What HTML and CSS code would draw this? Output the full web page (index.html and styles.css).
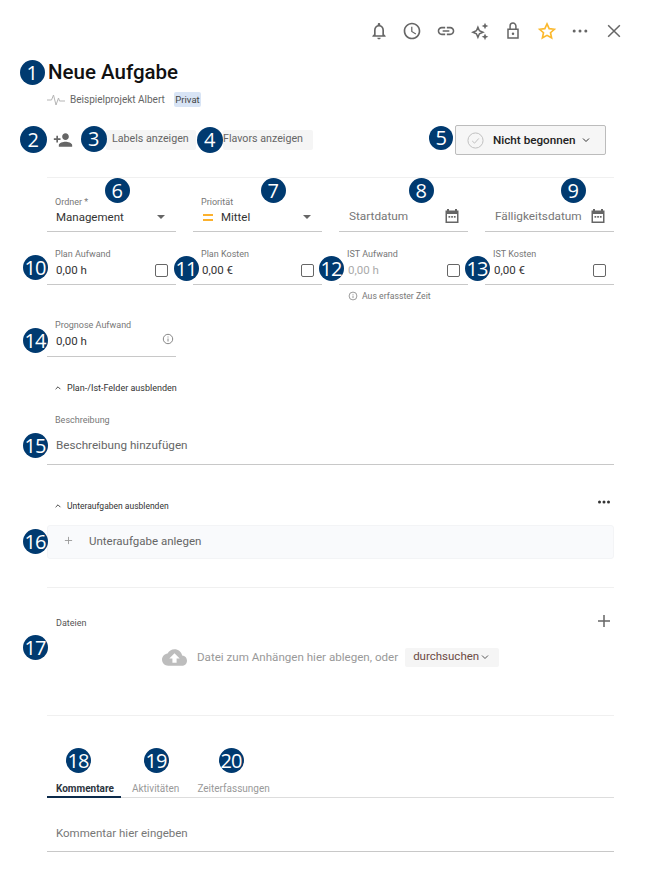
FILE: index.html
```html
<!DOCTYPE html>
<html lang="de">
<head>
<meta charset="utf-8">
<title>Neue Aufgabe</title>
<link rel="stylesheet" href="styles.css">
</head>
<body>
<main class="page">
  <header class="toolbar">
    <svg class="tb-icon" viewBox="0 0 24 24"><path d="M12 22c1.1 0 2-.9 2-2h-4c0 1.1.9 2 2 2zm6-6v-5c0-3.07-1.63-5.64-4.5-6.32V4c0-.83-.67-1.5-1.5-1.5s-1.5.67-1.5 1.5v.68C7.64 5.36 6 7.92 6 11v5l-2 2v1h16v-1l-2-2zm-2 1H8v-6c0-2.48 1.51-4.5 4-4.5s4 2.02 4 4.5v6z"/></svg>
    <svg class="tb-icon" viewBox="0 0 24 24"><path d="M11.99 2C6.47 2 2 6.48 2 12s4.47 10 9.99 10C17.52 22 22 17.52 22 12S17.52 2 11.99 2zM12 20c-4.42 0-8-3.58-8-8s3.58-8 8-8 8 3.58 8 8-3.58 8-8 8zm.5-13H11v6l5.25 3.15.75-1.23-4.5-2.67z"/></svg>
    <svg class="tb-icon" viewBox="0 0 24 24"><path d="M3.9 12c0-1.71 1.39-3.1 3.1-3.1h4V7H7c-2.76 0-5 2.24-5 5s2.24 5 5 5h4v-1.9H7c-1.71 0-3.1-1.39-3.1-3.1zM8 13h8v-2H8v2zm9-6h-4v1.9h4c1.71 0 3.1 1.39 3.1 3.1s-1.39 3.1-3.1 3.1h-4V17h4c2.76 0 5-2.24 5-5s-2.24-5-5-5z"/></svg>
    <svg class="tb-icon" viewBox="0 0 24 24"><path class="outline" d="M9.5 7.5l1.8 4.2 4.2 1.8-4.2 1.8-1.8 4.2-1.8-4.2-4.2-1.8 4.2-1.8z"/><path d="M18 2l1.2 2.8L22 6l-2.8 1.2L18 10l-1.2-2.8L14 6l2.8-1.2zM18 15l1.2 2.8L22 19l-2.8 1.2L18 23l-1.2-2.8L14 19l2.8-1.2z"/></svg>
    <svg class="tb-icon" viewBox="0 0 24 24"><path class="outline" d="M6 10h12v10.500H6zM8.500 10V6a3.500 3.500 0 0 1 7 0v4"/><circle cx="12" cy="15.200" r="1.500"/></svg>
    <svg class="tb-icon star" viewBox="0 0 24 24"><path d="M12 3.500l2.600 5.700 6.200.7-4.600 4.200 1.300 6.100L12 17.200l-5.500 3 1.300-6.100-4.600-4.200 6.200-.7z"/></svg>
    <svg class="tb-icon" viewBox="0 0 24 24"><circle cx="5" cy="12" r="1.800"/><circle cx="12" cy="12" r="1.800"/><circle cx="19" cy="12" r="1.800"/></svg>
    <svg class="tb-icon" viewBox="0 0 24 24"><path class="outline" d="M5 5l14 14M19 5L5 19"/></svg>
  </header>

  <h1 class="title">Neue Aufgabe</h1>
  <div class="project">
    <svg class="pulse" viewBox="0 0 18 12"><path d="M0 6h4.500l2-5 2.500 10 2.500-7 1 3H18"/></svg>
    <span class="project-name">Beispielprojekt Albert</span>
    <span class="private">Privat</span>
  </div>

  <div class="actions">
    <svg class="add-person" viewBox="0 0 24 24"><path d="M15 12c2.210 0 4-1.790 4-4s-1.790-4-4-4-4 1.790-4 4 1.790 4 4 4zm-9-2V7H4v3H1v2h3v3h2v-3h3v-2H6zm9 4c-2.670 0-8 1.340-8 4v2h16v-2c0-2.660-5.330-4-8-4z"/></svg>
    <span class="chip chip-labels">Labels anzeigen</span>
    <span class="chip chip-flavors">Flavors anzeigen</span>
    <button class="status" type="button">
      <svg class="status-check" viewBox="0 0 18 18"><circle cx="9" cy="9" r="8"/><path d="M5.500 9.500l2.500 2.300 4.500-5"/></svg>
      <span>Nicht begonnen</span>
      <svg class="chev" viewBox="0 0 10 6"><path d="M2 1.500l3 3 3-3"/></svg>
    </button>
  </div>

  <hr class="divider first-divider">

  <section class="grid row-one">
    <div class="field">
      <label class="label">Ordner *</label>
      <div class="value"><span class="grow">Management</span><i class="caret"></i></div>
    </div>
    <div class="field">
      <label class="label">Priorität</label>
      <div class="value"><i class="prio"></i><span class="grow">Mittel</span><i class="caret"></i></div>
    </div>
    <div class="field">
      <div class="value date"><span class="grow muted">Startdatum</span>
        <svg class="cal" viewBox="0 0 16 16"><path d="M3 1h2v1.500h6V1h2v1.500h1.500V15h-13V2.500H3zM3 6v7.500h10V6z"/><rect x="4.500" y="8" width="1.700" height="1.700"/><rect x="7.200" y="8" width="1.700" height="1.700"/><rect x="9.900" y="8" width="1.700" height="1.700"/></svg>
      </div>
    </div>
    <div class="field">
      <div class="value date"><span class="grow muted">Fälligkeitsdatum</span>
        <svg class="cal" viewBox="0 0 16 16"><path d="M3 1h2v1.500h6V1h2v1.500h1.500V15h-13V2.500H3zM3 6v7.500h10V6z"/><rect x="4.500" y="8" width="1.700" height="1.700"/><rect x="7.200" y="8" width="1.700" height="1.700"/><rect x="9.900" y="8" width="1.700" height="1.700"/></svg>
      </div>
    </div>
  </section>

  <section class="grid row-two">
    <div class="field">
      <label class="label">Plan Aufwand</label>
      <div class="value"><span class="grow">0,00 h</span><i class="check"></i></div>
    </div>
    <div class="field">
      <label class="label">Plan Kosten</label>
      <div class="value"><span class="grow">0,00 €</span><i class="check"></i></div>
    </div>
    <div class="field">
      <label class="label">IST Aufwand</label>
      <div class="value"><span class="grow faded">0,00 h</span><i class="check"></i></div>
      <div class="hint">
        <svg class="info" viewBox="0 0 12 12"><circle cx="6" cy="6" r="4.700"/><path d="M6 5.500v3M6 3.500v1"/></svg>
        <span>Aus erfasster Zeit</span>
      </div>
    </div>
    <div class="field">
      <label class="label">IST Kosten</label>
      <div class="value"><span class="grow">0,00 €</span><i class="check"></i></div>
    </div>
  </section>

  <section class="grid row-three">
    <div class="field">
      <label class="label">Prognose Aufwand</label>
      <div class="value"><span class="grow">0,00 h</span>
        <svg class="info info-large" viewBox="0 0 12 12"><circle cx="6" cy="6" r="4.700"/><path d="M6 5.500v3M6 3.500v1"/></svg>
      </div>
    </div>
  </section>

  <div class="toggle toggle-plan">
    <svg class="chev-up" viewBox="0 0 10 6"><path d="M2 4.500l3-3 3 3"/></svg>
    <span>Plan-/Ist-Felder ausblenden</span>
  </div>

  <section class="description">
    <label class="label">Beschreibung</label>
    <div class="desc-value">Beschreibung hinzufügen</div>
  </section>

  <div class="toggle toggle-sub">
    <svg class="chev-up" viewBox="0 0 10 6"><path d="M2 4.500l3-3 3 3"/></svg>
    <span class="grow">Unteraufgaben ausblenden</span>
    <svg class="more" viewBox="0 0 14 4"><circle cx="2.500" cy="2" r="1.500"/><circle cx="7" cy="2" r="1.500"/><circle cx="11.500" cy="2" r="1.500"/></svg>
  </div>

  <div class="subtask">
    <svg class="sub-plus" viewBox="0 0 10 10"><path d="M5 1v8M1 5h8"/></svg>
    <span>Unteraufgabe anlegen</span>
  </div>

  <hr class="divider sub-divider">

  <section class="files">
    <div class="files-head">
      <span class="files-title">Dateien</span>
      <svg class="files-plus" viewBox="0 0 14 14"><path d="M7 1v12M1 7h12"/></svg>
    </div>
    <div class="drop">
      <svg class="cloud" viewBox="0 0 24 24"><path d="M19.350 10.040C18.670 6.590 15.640 4 12 4 9.110 4 6.600 5.640 5.350 8.040 2.340 8.360 0 10.910 0 14c0 3.310 2.690 6 6 6h13c2.760 0 5-2.240 5-5 0-2.640-2.050-4.780-4.650-4.960zM14 13v4h-4v-4H7l5-5 5 5h-3z"/></svg>
      <span class="drop-text">Datei zum Anhängen hier ablegen, oder</span>
      <span class="browse">durchsuchen<svg class="chev-small" viewBox="0 0 10 6"><path d="M2 1.500l3 3 3-3"/></svg></span>
    </div>
  </section>

  <hr class="divider files-divider">

  <nav class="tabs">
    <span class="tab active">Kommentare</span>
    <span class="tab">Aktivitäten</span>
    <span class="tab">Zeiterfassungen</span>
  </nav>

  <div class="comment">Kommentar hier eingeben</div>

  <div class="badges">
    <span class="badge b1">1</span><span class="badge b2">2</span><span class="badge b3">3</span><span class="badge b4">4</span><span class="badge b5">5</span>
    <span class="badge b6">6</span><span class="badge b7">7</span><span class="badge b8">8</span><span class="badge b9">9</span><span class="badge b10">10</span>
    <span class="badge b11">11</span><span class="badge b12">12</span><span class="badge b13">13</span><span class="badge b14">14</span><span class="badge b15">15</span>
    <span class="badge b16">16</span><span class="badge b17">17</span><span class="badge b18">18</span><span class="badge b19">19</span><span class="badge b20">20</span>
  </div>
</main>
</body>
</html>
```
FILE: styles.css
```css
* { box-sizing: border-box; }
html, body { margin: 0; padding: 0; background: #fff; }
body { font-family: Roboto, "Liberation Sans", sans-serif; color: #333; }
.page { position: relative; width: 661px; height: 891px; padding: 0 47px; overflow: hidden; }
.grow { flex: 1; min-width: 0; }

.toolbar { height: 62px; padding: 21px 0 0 0; display: flex; justify-content: flex-end; gap: 13.600px; margin-right: -10px; }
.tb-icon { width: 20px; height: 20px; fill: #666; flex: none; }
.tb-icon .outline { fill: none; stroke: #666; stroke-width: 1.800; }
.tb-icon.star path { fill: none; stroke: #fbb92e; stroke-width: 2; stroke-linejoin: miter; }

.title { margin: 0; height: 20px; line-height: 20px; font-size: 20.500px; font-weight: 500; color: #111; padding-left: 1px; }
.project { height: 15px; margin-top: 10px; display: flex; align-items: center; font-size: 10px; color: #666; }
.pulse { width: 18px; height: 12px; fill: none; stroke: #b5b5b5; stroke-width: 1; margin-right: 5px; }
.project-name { width: 104px; }
.private { height: 15px; width: 27px; line-height: 16px; font-size: 9.500px; text-align: center; background: #d8e4f5; border-radius: 2px; color: #444; }

.actions { display: flex; align-items: flex-start; height: 30px; margin-top: 18px; position: relative; }
.add-person { width: 20px; height: 20px; fill: #666; margin: 5px 0 0 6px; flex: none; }
.chip { height: 20px; line-height: 18px; font-size: 10.700px; color: #666; background: #f5f5f5; border-radius: 2px; margin-top: 5px; }
.chip-labels { width: 90px; margin-left: 33px; padding-left: 6px; }
.chip-flavors { width: 90px; margin-left: 27px; padding-left: 0; }
.status { margin-left: 142px; width: 151px; height: 30px; display: flex; align-items: center; padding: 0 0 0 11px; background: #f6f6f6; border: 1px solid #bcbcbc; border-radius: 2px; font: 500 11.700px Roboto, sans-serif; color: #222; }
.status-check { width: 17px; height: 17px; fill: none; stroke: #bdbdbd; stroke-width: 1; margin-right: 9px; flex: none; }
.chev { width: 10px; height: 6px; fill: none; stroke: #333; stroke-width: 1; margin-left: 5px; }

.divider { border: 0; height: 1px; margin: 0; background: #f0f0f0; }
.first-divider { margin-top: 22px; }

.grid { display: grid; grid-template-columns: repeat(4, 129px); column-gap: 17px; }
.field { position: relative; display: flex; flex-direction: column; justify-content: flex-end; }
.label { display: block; font-size: 9px; line-height: 10px; color: #777; padding-left: 8px; }
.value { height: 24px; display: flex; align-items: center; padding: 0 8px 6px 9px; border-bottom: 1px solid #c8c8c8; font-size: 11.500px; line-height: 16px; color: #333; }
.muted { color: #777; }
.faded { color: #aaa; }
.row-one { height: 54px; }
.row-one .label { margin-bottom: 1px; }
.row-two { height: 53px; }
.row-two .field { justify-content: flex-start; }
.row-two .label { margin-top: 17px; }
.row-two .value { height: 26px; padding-top: 1px; padding-bottom: 5px; }
.row-three { height: 72px; padding-top: 35px; }
.row-three .label { margin-bottom: 1px; }
.row-three .value { height: 26px; padding-top: 1px; padding-bottom: 7px; }
.caret { width: 0; height: 0; border-left: 4.500px solid transparent; border-right: 4.500px solid transparent; border-top: 4.500px solid #666; margin-right: 3px; }
.prio { width: 10px; height: 7px; border-top: 2px solid #fbb12e; border-bottom: 2px solid #fbb12e; margin: 2px 8px 0 1px; flex: none; }
.date { height: 32px; padding: 0 0 0 10px; font-size: 11.800px; }
.cal { width: 16px; height: 16px; fill: #666; margin: 1px 8px 0 0; flex: none; }
.check { width: 13px; height: 13px; border: 1px solid #666; border-radius: 2px; margin: 2px 0 0 0; flex: none; }
.hint { position: absolute; top: 59px; left: 9px; display: flex; align-items: center; gap: 4px; font-size: 8.700px; color: #777; white-space: nowrap; }
.info { width: 10px; height: 10px; fill: none; stroke: #888; stroke-width: 1; }
.info-large { width: 12px; height: 12px; margin: -4px -6px 0 0; }

.toggle { display: flex; align-items: center; font-size: 9px; color: #333; }
.toggle-plan { height: 12px; margin-top: 25px; padding-left: 7px; }
.toggle-sub { height: 12px; margin-top: 35px; padding-left: 7px; }
.toggle-sub .grow { font-size: 8.500px; }
.chev-up { width: 8px; height: 6px; fill: none; stroke: #333; stroke-width: 1.100; margin-right: 5px; flex: none; }
.more { width: 14px; height: 4px; fill: #333; margin: -9px 3px 0 0; flex: none; }

.description { margin-top: 20px; }
.description .label { line-height: 12px; }
.desc-value { height: 39px; padding: 11px 0 0 9px; line-height: 16px; font-size: 11.700px; color: #666; border-bottom: 1px solid #c8c8c8; }

.subtask { height: 34px; margin-top: 13px; display: flex; align-items: center; padding: 0 0 3px 16px; background: #f9fafc; border: 1px solid #f3f4f6; border-radius: 3px; font-size: 11.500px; color: #666; }
.sub-plus { width: 9px; height: 9px; fill: none; stroke: #999; stroke-width: 1; margin-right: 16px; }
.sub-divider { margin-top: 28px; }

.files { height: 99px; }
.files-head { display: flex; align-items: center; justify-content: space-between; height: 14px; margin-top: 28px; padding-left: 9px; font-size: 9px; color: #555; }
.files-plus { width: 14px; height: 14px; fill: none; stroke: #666; stroke-width: 1.500; margin: -4px 3px 0 0; }
.drop { display: flex; align-items: center; height: 24px; margin-top: 15px; padding-left: 115px; font-size: 11.600px; color: #999; }
.cloud { width: 25px; height: 25px; fill: #bdbdbd; margin-right: 10px; flex: none; }
.drop-text { margin-right: 7px; }
.browse { height: 19px; padding: 0 9px 2px 8px; line-height: 16px; font-size: 11.500px; color: #6b4a44; background: #f5f5f5; border-radius: 2px; display: flex; align-items: center; }
.chev-small { width: 10px; height: 6px; fill: none; stroke: #555; stroke-width: 1; margin: 2px 0 0 1px; }

.tabs { display: flex; height: 25px; margin-top: 57px; border-bottom: 1px solid #ddd; font-size: 10px; color: #999; position: relative; }
.tab { padding: 9px 9px 0 9px; height: 25px; line-height: 14px; }
.tab:nth-child(2) { padding-left: 11px; }
.tab:nth-child(3) { padding-left: 9px; padding-right: 0; }
.tab.active { width: 74px; padding-left: 9px; color: #2d3540; font-weight: 700; border-bottom: 2px solid #0b2a4a; }

.comment { height: 54px; padding: 27px 0 0 9px; line-height: 16px; font-size: 11.500px; color: #777; border-bottom: 1px solid #c8c8c8; }

.badges { position: absolute; inset: 0; pointer-events: none; }
.badge { position: absolute; width: 25px; height: 25px; margin: -12.500px 0 0 -12.500px; border-radius: 50%; background: #003a70; color: #fff; font: 400 20px/25px "Open Sans", sans-serif; text-align: center; letter-spacing: -.5px; }
.b1 { left: 32px; top: 72px; } .b2 { left: 33px; top: 139px; width: 27px; height: 27px; margin: -13.500px 0 0 -13.500px; line-height: 27px; }
.b3 { left: 93px; top: 138px; width: 26px; height: 26px; line-height: 26px; } .b4 { left: 209px; top: 139px; width: 26px; height: 26px; line-height: 26px; }
.b5 { left: 441px; top: 138px; width: 24px; height: 24px; margin: -12px 0 0 -12px; line-height: 24px; }
.b6 { left: 117px; top: 190px; } .b7 { left: 273px; top: 190px; } .b8 { left: 421px; top: 190px; } .b9 { left: 573px; top: 190px; }
.b10, .b11, .b12, .b13, .b14, .b15, .b16, .b17, .b18, .b19, .b20 { letter-spacing: -1px; }
.b10 { left: 35px; top: 267px; } .b11 { left: 186px; top: 268px; } .b12 { left: 331px; top: 268px; } .b13 { left: 477px; top: 268px; }
.b14 { left: 35px; top: 340px; } .b15 { left: 35px; top: 445px; } .b16 { left: 35px; top: 541px; } .b17 { left: 35px; top: 647px; }
.b18 { left: 78px; top: 760px; } .b19 { left: 156px; top: 760px; } .b20 { left: 231px; top: 760px; }
```
